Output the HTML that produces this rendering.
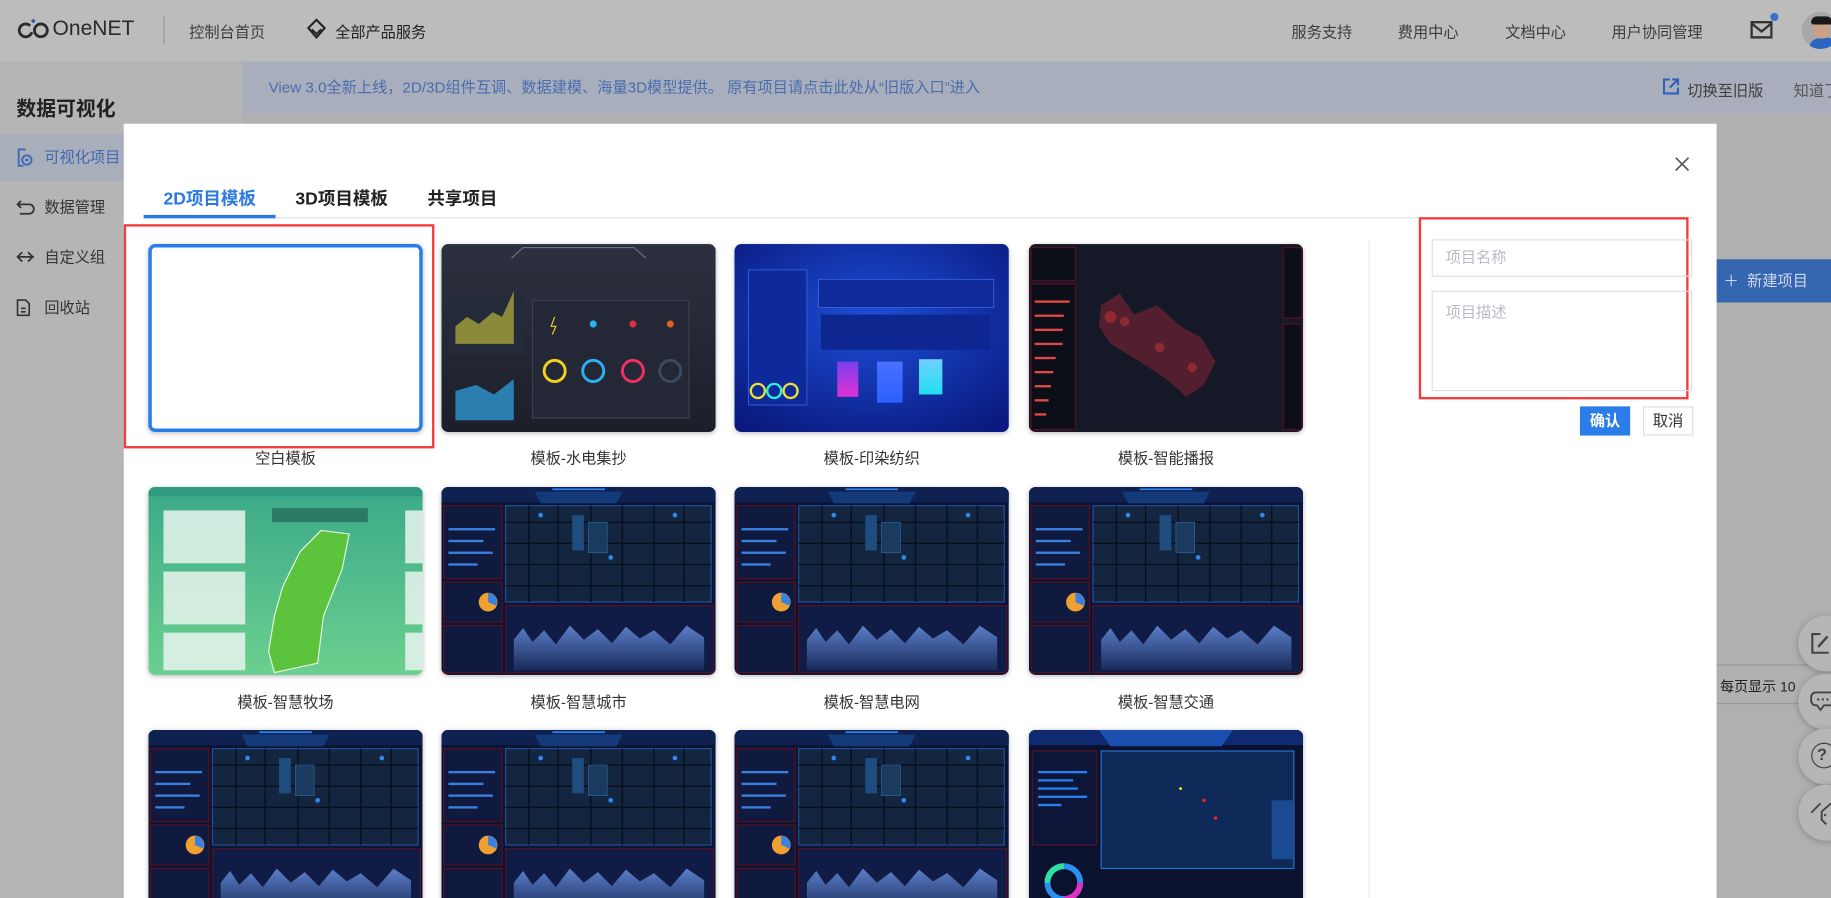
<!DOCTYPE html>
<html><head><meta charset="utf-8">
<style>
*{margin:0;padding:0;box-sizing:border-box}
html,body{width:1831px;height:898px;overflow:hidden;background:#a9a9a9}
body{font-family:"Liberation Sans","Noto Sans CJK SC",sans-serif}
#w{position:absolute;left:0;top:0;width:1568px;height:769px;transform:scale(1.16773);transform-origin:0 0;background:#b0b0b0;overflow:hidden}
.a{position:absolute}
.hdr{left:0;top:0;width:1568px;height:53px;background:#bcbcbc;box-shadow:0 1px 3px rgba(0,0,0,.15)}
.nav{font-size:13px;color:#3d3d3d;top:17px}
.side{left:0;top:53px;width:208px;height:716px;background:#b5b5b5}
.si{left:0;width:208px;height:40px;font-size:13px;color:#333;line-height:40px;padding-left:38px}
.ban{left:208px;top:53px;width:1360px;height:44px;background:#a8aebb;font-size:13px;color:#4a6db0;line-height:44px;padding-left:0}
.modal{left:106px;top:106px;width:1364px;height:680px;background:#fff}
.tab{top:159px;font-size:15px;font-weight:bold;color:#222}
.card{width:235px;height:161px;border-radius:6px;overflow:hidden;box-shadow:0 1px 4px rgba(0,0,0,.25)}
.card svg{width:100%;height:100%;display:block}
.lbl{width:235px;text-align:center;font-size:13px;color:#333}
.fab{width:48px;height:48px;border-radius:50%;background:#b6b6b6;box-shadow:0 1px 6px rgba(0,0,0,.25);left:1540px}
</style></head><body><div id="w">
<svg width="0" height="0" style="position:absolute">
<defs>
<linearGradient id="ga" x1="0" y1="0" x2="0" y2="1"><stop offset="0" stop-color="#5b7fc8"/><stop offset="1" stop-color="#1a2a5a"/></linearGradient>
<symbol id="map" viewBox="0 0 235 160" preserveAspectRatio="none">
<rect width="235" height="160" fill="#0b1533"/>
<rect width="235" height="13" fill="#0f2150"/>
<polygon points="80,4 155,4 150,14 85,14" fill="#143a7a"/>
<line x1="95" y1="2" x2="140" y2="2" stroke="#2e7ef0" stroke-width="1.5"/>
<rect x="2" y="16" width="50" height="62" fill="#0f1a3e" stroke="#5a0f1f"/>
<rect x="6" y="35" width="40" height="2" fill="#3a80e0"/><rect x="6" y="45" width="30" height="2" fill="#3a80e0"/><rect x="6" y="55" width="38" height="2" fill="#3a80e0"/><rect x="6" y="65" width="25" height="2" fill="#3a80e0"/>
<rect x="2" y="81" width="50" height="34" fill="#0f1a3e" stroke="#5a0f1f"/>
<circle cx="40" cy="98" r="8" fill="#f0a030"/><path d="M40 98 L40 90 A8 8 0 0 1 47 101Z" fill="#3a80e0"/>
<rect x="2" y="118" width="50" height="40" fill="#0f1a3e" stroke="#5a0f1f"/>
<rect x="55" y="16" width="176" height="82" fill="#13253f" stroke="#2050a0"/>
<g stroke="#07101e" stroke-width="1.2">
<line x1="55" y1="30" x2="231" y2="30"/><line x1="55" y1="48" x2="231" y2="48"/><line x1="55" y1="66" x2="231" y2="66"/><line x1="55" y1="84" x2="231" y2="84"/>
<line x1="75" y1="16" x2="75" y2="98"/><line x1="100" y1="16" x2="100" y2="98"/><line x1="128" y1="16" x2="128" y2="98"/><line x1="155" y1="16" x2="155" y2="98"/><line x1="182" y1="16" x2="182" y2="98"/><line x1="208" y1="16" x2="208" y2="98"/></g>
<rect x="112" y="24" width="10" height="30" fill="#1f4d80"/><rect x="126" y="30" width="16" height="26" fill="#1a3b5e" stroke="#2f6fb0" stroke-width=".5"/>
<circle cx="85" cy="24" r="2" fill="#2e8af0"/><circle cx="200" cy="24" r="2" fill="#2e8af0"/><circle cx="145" cy="60" r="2" fill="#2e8af0"/>
<rect x="55" y="101" width="178" height="57" fill="#101c45" stroke="#5a0f1f"/>
<path d="M62 156 L62 130 L70 120 L78 132 L88 122 L98 134 L110 118 L122 130 L134 121 L146 133 L158 119 L170 129 L182 122 L196 134 L210 118 L225 128 L225 156Z" fill="url(#ga)"/>
</symbol>
</defs></svg>

<div class="a hdr"></div>
<svg class="a" style="left:15px;top:14px" width="28" height="22" viewBox="0 0 28 22"><circle cx="7" cy="12" r="5.5" fill="none" stroke="#2a2a2a" stroke-width="2.4" stroke-dasharray="28 6" transform="rotate(20 7 12)"/><circle cx="20" cy="12" r="5.5" fill="none" stroke="#2a2a2a" stroke-width="2.4"/><path d="M13.5 2 l2 2 -2 2 -2 -2z" fill="#2a5db0"/></svg>
<div class="a" style="left:45px;top:14px;font-size:18px;color:#2a2a2a">OneNET</div>
<div class="a" style="left:140px;top:14px;width:1px;height:24px;background:#999"></div>
<div class="a nav" style="left:162px">控制台首页</div>
<svg class="a" style="left:263px;top:16px" width="16" height="18" viewBox="0 0 16 18"><path d="M8 1 L15 8 L8 16 L1 8Z" fill="none" stroke="#222" stroke-width="1.8"/><path d="M4 9 L8 13 L12 9" fill="none" stroke="#222" stroke-width="1.5"/></svg>
<div class="a nav" style="left:287px;color:#222">全部产品服务</div>
<div class="a nav" style="left:1106px">服务支持</div>
<div class="a nav" style="left:1197px">费用中心</div>
<div class="a nav" style="left:1289px">文档中心</div>
<div class="a nav" style="left:1380px">用户协同管理</div>
<svg class="a" style="left:1499px;top:18px" width="19" height="16" viewBox="0 0 19 16"><rect x="1" y="1" width="17" height="13" fill="none" stroke="#333" stroke-width="2"/><path d="M1 2 L9.5 9 L18 2" fill="none" stroke="#333" stroke-width="2"/></svg>
<div class="a" style="left:1516px;top:11px;width:7px;height:7px;border-radius:50%;background:#3b72c8"></div>
<div class="a" style="left:1543px;top:10px;width:32px;height:32px;border-radius:50%;background:#a8a8a8;overflow:hidden"><div class="a" style="left:7px;top:22px;width:24px;height:14px;border-radius:50%;background:#2a63c0"></div><div class="a" style="left:10px;top:7px;width:14px;height:16px;border-radius:40%;background:#caa088"></div><div class="a" style="left:8px;top:4px;width:18px;height:7px;border-radius:5px 5px 2px 2px;background:#1a1a1a"></div></div>

<div class="a side"></div>
<div class="a" style="left:14px;top:79px;font-size:17px;font-weight:bold;color:#222">数据可视化</div>
<div class="a si" style="top:115px;background:#a9aebb;color:#3f68b5">可视化项目</div>
<svg class="a" style="left:14px;top:127px" width="14" height="16" viewBox="0 0 14 16"><path d="M8 1 H2 V15 H6" fill="none" stroke="#3f68b5" stroke-width="1.6"/><circle cx="9" cy="10" r="4" fill="none" stroke="#3f68b5" stroke-width="1.6"/><circle cx="9" cy="10" r="1.3" fill="#3f68b5"/></svg>
<div class="a si" style="top:158px">数据管理</div>
<svg class="a" style="left:14px;top:171px" width="16" height="14" viewBox="0 0 16 14"><path d="M4 1 L1 4 L4 7 M1 4 H11 A4 4 0 0 1 11 12 H3" fill="none" stroke="#333" stroke-width="1.5"/></svg>
<div class="a si" style="top:201px">自定义组</div>
<svg class="a" style="left:14px;top:214px" width="16" height="12" viewBox="0 0 16 12"><path d="M1 6 H15 M5 2 L1 6 L5 10 M10 2 L14 6 M10 10 L14 6" fill="none" stroke="#333" stroke-width="1.5"/></svg>
<div class="a si" style="top:244px">回收站</div>
<svg class="a" style="left:14px;top:256px" width="12" height="15" viewBox="0 0 12 15"><path d="M1 1 H8 L11 4 V14 H1Z M4 8 H8 M4 11 H8" fill="none" stroke="#333" stroke-width="1.4"/></svg>

<div class="a ban"><span style="margin-left:22px">View 3.0全新上线，2D/3D组件互调、数据建模、海量3D模型提供。 原有项目请点击此处从“旧版入口”进入</span></div>
<svg class="a" style="left:1424px;top:67px" width="14" height="14" viewBox="0 0 14 14"><path d="M6 1 H1 V13 H13 V8 M8 1 H13 V6 M13 1 L6 8" fill="none" stroke="#2f62c0" stroke-width="1.8"/></svg>
<div class="a" style="left:1445px;top:67px;font-size:13px;color:#3f3f3f">切换至旧版</div>
<div class="a" style="left:1536px;top:67px;font-size:13px;color:#555;white-space:nowrap">知道了</div>

<div class="a" style="left:1470px;top:222px;width:100px;height:37px;background:#3566b0;color:#cfd9ee;font-size:13px;line-height:37px;padding-left:6px">＋ &nbsp;新建项目</div>
<div class="a" style="left:1470px;top:569px;width:98px;height:1px;background:#999"></div>
<div class="a" style="left:1470px;top:602px;width:98px;height:1px;background:#999"></div>
<div class="a" style="left:1473px;top:579px;font-size:12px;color:#222">每页显示 10</div>
<div class="a fab" style="top:527px"></div>
<div class="a fab" style="top:577px"></div>
<div class="a fab" style="top:624px"></div>
<div class="a fab" style="top:672px"></div>
<svg class="a" style="left:1550px;top:541px" width="18" height="20" viewBox="0 0 18 20"><path d="M9 2 H2 V18 H16" fill="none" stroke="#444" stroke-width="1.8"/><path d="M7 13 L15 4" stroke="#444" stroke-width="2"/></svg>
<svg class="a" style="left:1550px;top:590px" width="18" height="20" viewBox="0 0 18 20"><path d="M18 3 H5 A4 4 0 0 0 1 7 V10 A4 4 0 0 0 5 14 H6 L9 18 L12 14 H18" fill="none" stroke="#444" stroke-width="1.6"/><circle cx="7" cy="9" r="1" fill="#444"/><circle cx="11" cy="9" r="1" fill="#444"/><circle cx="15" cy="9" r="1" fill="#444"/></svg>
<div class="a" style="left:1551px;top:636px;width:22px;height:22px;border-radius:50%;border:1.8px solid #444;font-size:14px;font-weight:bold;color:#444;line-height:18px;padding-left:4px">?</div>
<svg class="a" style="left:1550px;top:685px" width="18" height="22" viewBox="0 0 18 22"><path d="M18 3 L10 10 V17 L14 21 M1 11 L9 3" fill="none" stroke="#444" stroke-width="1.6"/><circle cx="13" cy="13" r="1" fill="#444"/></svg>

<div class="a modal"></div>
<svg class="a" style="left:1434px;top:134px" width="13" height="13" viewBox="0 0 13 13"><path d="M1 1 L12 12 M12 1 L1 12" stroke="#555" stroke-width="1.4"/></svg>
<div class="a tab" style="left:140px;color:#2a7ae2">2D项目模板</div>
<div class="a tab" style="left:253px">3D项目模板</div>
<div class="a tab" style="left:366px">共享项目</div>
<div class="a" style="left:123px;top:186px;width:1327px;height:1px;background:#dfe3ea"></div>
<div class="a" style="left:123px;top:184px;width:113px;height:3px;background:#2a7ae2"></div>
<div class="a" style="left:1172px;top:205px;width:1px;height:564px;background:#ececec"></div>

<div class="a" style="left:106px;top:192px;width:266px;height:192px;border:2px solid #f43a3a"></div>
<div class="a card" style="left:127px;top:209px;border:3px solid #2b7de9;background:#fff"></div>
<div class="a card" style="left:378px;top:209px"><svg viewBox="0 0 235 160" preserveAspectRatio="none"><defs><linearGradient id="g2" x1="0" y1="0" x2="0" y2="1"><stop offset="0" stop-color="#2d313f"/><stop offset="1" stop-color="#1c1f2a"/></linearGradient></defs><rect width="235" height="160" fill="url(#g2)"/><path d="M60 12 L70 3 H165 L175 12" fill="none" stroke="#6a7085"/><rect x="5" y="44" width="66" height="50" fill="#252a38"/><path d="M12 85 L12 70 L22 62 L32 68 L44 58 L52 62 L62 40 L62 85Z" fill="#8b8a3a"/><path d="M12 150 L12 125 L30 120 L45 128 L62 115 L62 150Z" fill="#2a7fb0"/><rect x="78" y="48" width="134" height="100" fill="#232736" stroke="#3a4050"/><circle cx="97" cy="108" r="9" fill="none" stroke="#f0d020" stroke-width="2.5"/><circle cx="130" cy="108" r="9" fill="none" stroke="#2ab0f0" stroke-width="2.5"/><circle cx="164" cy="108" r="9" fill="none" stroke="#f03060" stroke-width="2.5"/><circle cx="196" cy="108" r="9" fill="none" stroke="#3c4a60" stroke-width="2.5"/><path d="M97 62 l-3 8 h4 l-3 7" stroke="#f0d020" fill="none"/><circle cx="130" cy="68" r="3" fill="#2ab0f0"/><circle cx="164" cy="68" r="3" fill="#e03040"/><circle cx="196" cy="68" r="3" fill="#e06020"/></svg></div>
<div class="a card" style="left:629px;top:209px"><svg viewBox="0 0 235 160" preserveAspectRatio="none"><defs><radialGradient id="g3" cx=".5" cy=".4" r=".7"><stop offset="0" stop-color="#1d4fd8"/><stop offset="1" stop-color="#0a1a80"/></radialGradient><linearGradient id="p1" x1="0" y1="0" x2="0" y2="1"><stop offset="0" stop-color="#7a40f0"/><stop offset="1" stop-color="#e030d0"/></linearGradient><linearGradient id="p2" x1="0" y1="0" x2="0" y2="1"><stop offset="0" stop-color="#4a70ff"/><stop offset="1" stop-color="#2a60ff"/></linearGradient><linearGradient id="p3" x1="0" y1="0" x2="0" y2="1"><stop offset="0" stop-color="#70d0ff"/><stop offset="1" stop-color="#20e0f0"/></linearGradient></defs><rect width="235" height="160" fill="url(#g3)"/><rect x="12" y="22" width="50" height="115" fill="#0e2a9a" stroke="#3a70f0" stroke-width=".6"/><rect x="72" y="30" width="150" height="24" fill="#102a9a" stroke="#3a70f0" stroke-width=".6"/><rect x="74" y="60" width="145" height="30" fill="#0e2690"/><rect x="88" y="100" width="18" height="30" fill="url(#p1)"/><rect x="122" y="100" width="22" height="35" fill="url(#p2)"/><rect x="158" y="98" width="20" height="30" fill="url(#p3)"/><circle cx="20" cy="125" r="6" fill="none" stroke="#f0e030" stroke-width="2"/><circle cx="34" cy="125" r="6" fill="none" stroke="#30f0e0" stroke-width="2"/><circle cx="48" cy="125" r="6" fill="none" stroke="#f0e030" stroke-width="2"/></svg></div>
<div class="a card" style="left:881px;top:209px"><svg viewBox="0 0 235 160" preserveAspectRatio="none"><rect width="235" height="160" fill="#151827"/><rect x="2" y="3" width="38" height="28" fill="#0d0f18" stroke="#5a0f1f"/><rect x="2" y="34" width="38" height="124" fill="#0d0f18" stroke="#5a0f1f"/><g fill="#e04848"><rect x="5" y="48" width="30" height="2"/><rect x="5" y="60" width="25" height="2"/><rect x="5" y="72" width="24" height="2"/><rect x="5" y="84" width="24" height="2"/><rect x="5" y="96" width="18" height="2"/><rect x="5" y="108" width="16" height="2"/><rect x="5" y="120" width="14" height="2"/><rect x="5" y="132" width="12" height="2"/><rect x="5" y="144" width="10" height="2"/></g><path d="M62 52 L78 42 L90 60 L110 52 L130 70 L148 80 L160 100 L150 120 L135 130 L118 115 L95 100 L70 85 L60 70Z" fill="#5a2030" opacity=".9"/><circle cx="70" cy="62" r="5" fill="#902a30"/><circle cx="82" cy="66" r="4" fill="#902a30"/><circle cx="112" cy="88" r="4" fill="#902a30"/><circle cx="140" cy="105" r="4" fill="#902a30"/><rect x="218" y="3" width="16" height="60" fill="#0d0f18" stroke="#5a0f1f"/><rect x="218" y="68" width="16" height="90" fill="#0d0f18" stroke="#5a0f1f"/></svg></div>
<div class="a lbl" style="left:127px;top:382px">空白模板</div>
<div class="a lbl" style="left:378px;top:382px">模板-水电集抄</div>
<div class="a lbl" style="left:629px;top:382px">模板-印染纺织</div>
<div class="a lbl" style="left:881px;top:382px">模板-智能播报</div>

<div class="a card" style="left:127px;top:417px"><svg viewBox="0 0 235 160" preserveAspectRatio="none"><defs><linearGradient id="g5" x1="0" y1="0" x2="0" y2="1"><stop offset="0" stop-color="#3aa987"/><stop offset="1" stop-color="#6bd08f"/></linearGradient></defs><rect width="235" height="160" fill="url(#g5)"/><g fill="#e8f5ee" opacity=".85"><rect x="13" y="20" width="70" height="45"/><rect x="13" y="72" width="70" height="45"/><rect x="13" y="124" width="70" height="32"/><rect x="220" y="20" width="15" height="45"/><rect x="220" y="72" width="15" height="45"/><rect x="220" y="124" width="15" height="32"/></g><rect x="106" y="18" width="82" height="12" fill="#2a7a66"/><path d="M148 37 L172 40 L166 70 L160 85 L150 110 L145 150 L108 158 L103 140 L108 110 L115 85 L130 55Z" fill="#5cc43c" stroke="#e6f6e0" stroke-width="1"/><rect x="0" y="0" width="235" height="8" fill="#2f9a80"/></svg></div>
<div class="a card" style="left:378px;top:417px"><svg viewBox="0 0 235 160" preserveAspectRatio="none"><use href="#map"/></svg></div>
<div class="a card" style="left:629px;top:417px"><svg viewBox="0 0 235 160" preserveAspectRatio="none"><use href="#map"/></svg></div>
<div class="a card" style="left:881px;top:417px"><svg viewBox="0 0 235 160" preserveAspectRatio="none"><use href="#map"/></svg></div>
<div class="a lbl" style="left:127px;top:591px">模板-智慧牧场</div>
<div class="a lbl" style="left:378px;top:591px">模板-智慧城市</div>
<div class="a lbl" style="left:629px;top:591px">模板-智慧电网</div>
<div class="a lbl" style="left:881px;top:591px">模板-智慧交通</div>

<div class="a card" style="left:127px;top:625px"><svg viewBox="0 0 235 160" preserveAspectRatio="none"><use href="#map"/></svg></div>
<div class="a card" style="left:378px;top:625px"><svg viewBox="0 0 235 160" preserveAspectRatio="none"><use href="#map"/></svg></div>
<div class="a card" style="left:629px;top:625px"><svg viewBox="0 0 235 160" preserveAspectRatio="none"><use href="#map"/></svg></div>
<div class="a card" style="left:881px;top:625px"><svg viewBox="0 0 235 160" preserveAspectRatio="none"><rect width="235" height="160" fill="#0a1230"/><rect width="235" height="13" fill="#0f2a70"/><polygon points="60,0 175,0 165,14 70,14" fill="#1a4fb0"/><rect x="3" y="18" width="55" height="80" fill="#0d1638" stroke="#5a0f1f"/><g fill="#2a80f0"><rect x="8" y="35" width="42" height="2"/><rect x="8" y="42" width="30" height="2"/><rect x="8" y="49" width="34" height="2"/><rect x="8" y="56" width="42" height="2"/><rect x="8" y="63" width="20" height="2"/></g><circle cx="30" cy="130" r="14" fill="none" stroke="#2a90f0" stroke-width="5"/><path d="M30 116 A14 14 0 0 0 16 130" fill="none" stroke="#30e0a0" stroke-width="5"/><path d="M44 130 A14 14 0 0 1 30 144" fill="none" stroke="#e030c0" stroke-width="5"/><rect x="62" y="18" width="165" height="100" fill="#0f2a58" stroke="#2a70d0"/><rect x="208" y="60" width="18" height="50" fill="#1a4a90"/><circle cx="150" cy="60" r="1.5" fill="#f02020"/><circle cx="160" cy="75" r="1.5" fill="#f02020"/><circle cx="130" cy="50" r="1.2" fill="#f0f020"/></svg></div>

<div class="a" style="left:1215px;top:186px;width:231px;height:156px;border:2px solid #f43a3a"></div>
<div class="a" style="left:1226px;top:205px;width:223px;height:32px;border:1px solid #dcdfe6;font-size:13px;color:#b8bcc4;line-height:30px;padding-left:11px">项目名称</div>
<div class="a" style="left:1226px;top:249px;width:223px;height:86px;border:1px solid #dcdfe6;font-size:13px;color:#b8bcc4;padding:7px 11px">项目描述</div>
<div class="a" style="left:1353px;top:348px;width:43px;height:25px;background:#2b7de9;color:#fff;font-size:13px;font-weight:bold;text-align:center;line-height:25px">确认</div>
<div class="a" style="left:1407px;top:348px;width:43px;height:25px;border:1px solid #dcdfe6;color:#333;font-size:13px;text-align:center;line-height:23px">取消</div>
</div></body></html>
